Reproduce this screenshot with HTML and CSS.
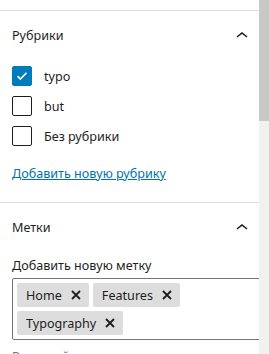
FILE: index.html
```html
<!DOCTYPE html>
<html lang="ru">
<head>
  <meta charset="UTF-8">
  <title>Рубрики и метки</title>
  <link rel="stylesheet" href="styles.css">
</head>
<body>
  <div class="page">
    <div class="sidebar">
      <div class="panel-prev"></div>

      <!-- Рубрики -->
      <div class="panel">
        <div class="panel-header">
          <span>Рубрики</span>
          <svg class="chevron" width="24" height="24" viewBox="0 0 24 24"><path d="M6.5 12.4L12 8l5.5 4.4-.9 1.2L12 10l-4.6 3.6-.9-1.2z"/></svg>
        </div>
        <div class="panel-body">
          <label class="check-row">
            <span class="checkbox checked">
              <svg width="20" height="20" viewBox="0 0 20 20"><path d="M5 10.2l3.2 3.2L15 6.4" fill="none" stroke="#fff" stroke-width="1.8"/></svg>
            </span>
            typo
          </label>
          <label class="check-row"><span class="checkbox"></span>but</label>
          <label class="check-row"><span class="checkbox"></span>Без рубрики</label>
          <a class="add-link" href="#">Добавить новую рубрику</a>
        </div>
      </div>

      <!-- Метки -->
      <div class="panel">
        <div class="panel-header">
          <span>Метки</span>
          <svg class="chevron" width="24" height="24" viewBox="0 0 24 24"><path d="M6.5 12.4L12 8l5.5 4.4-.9 1.2L12 10l-4.6 3.6-.9-1.2z"/></svg>
        </div>
        <div class="panel-body tags-body">
          <div class="field-label">Добавить новую метку</div>
          <div class="tags-field">
            <span class="tag">Home <svg class="tag-x" width="10" height="10" viewBox="0 0 10 10"><path d="M1 1l8 8M9 1l-8 8"/></svg></span>
            <span class="tag">Features <svg class="tag-x" width="10" height="10" viewBox="0 0 10 10"><path d="M1 1l8 8M9 1l-8 8"/></svg></span>
            <span class="tag">Typography <svg class="tag-x" width="10" height="10" viewBox="0 0 10 10"><path d="M1 1l8 8M9 1l-8 8"/></svg></span>
          </div>
          <div class="help">Разделяйте метки запятыми или клавишей Enter.</div>
        </div>
      </div>
    </div>
    <div class="scrollbar"><div class="thumb"></div></div>
  </div>
</body>
</html>
```

FILE: styles.css
```css
body {
  margin: 0;
  font-family: "Noto Sans", "Open Sans", sans-serif;
  font-size: 12.6px;
  color: #1e1e1e;
  background: #fff;
}
.page {
  display: flex;
  height: 354px;
  overflow: hidden;
}
.sidebar {
  width: 259px;
  overflow: hidden;
}
.panel-prev {
  height: 10px;
}
.panel {
  border-top: 1px solid #e0e0e0;
}
.panel-header {
  height: 49px;
  padding: 0 5px 0 12px;
  display: flex;
  align-items: center;
  justify-content: space-between;
}
.chevron {
  fill: #1e1e1e;
}
.panel-body {
  padding: 6px 0 20px 12px;
}
.check-row {
  display: flex;
  align-items: center;
  gap: 12px;
  height: 20px;
  margin-bottom: 10px;
}
.checkbox {
  width: 18px;
  height: 18px;
  border: 1px solid #1e1e1e;
  border-radius: 2px;
  display: flex;
  align-items: center;
  justify-content: center;
}
.checkbox.checked {
  background: #007cba;
  border-color: #007cba;
}
.add-link {
  display: inline-block;
  margin-top: 9px;
  color: #0073aa;
  text-decoration: underline;
}
.tags-body {
  padding-top: 5px;
}
.field-label {
  line-height: 18px;
  margin-bottom: 3px;
}
.tags-field {
  width: 260px;
  border: 1px solid #757575;
  border-radius: 2px;
  padding: 4px;
  display: flex;
  flex-wrap: wrap;
  gap: 4px;
}
.tag {
  height: 24px;
  background: #ddd;
  border-radius: 2px;
  padding: 0 8px 0 9px;
  display: flex;
  align-items: center;
  gap: 9px;
}
.tag-x {
  stroke: #1e1e1e;
  stroke-width: 1.8;
}
.help {
  margin-top: 8px;
  line-height: 18px;
  color: #757575;
}
.scrollbar {
  width: 10px;
  background: #f1f1f1;
}
.thumb {
  height: 121px;
  background: #c8c8c8;
}
```
